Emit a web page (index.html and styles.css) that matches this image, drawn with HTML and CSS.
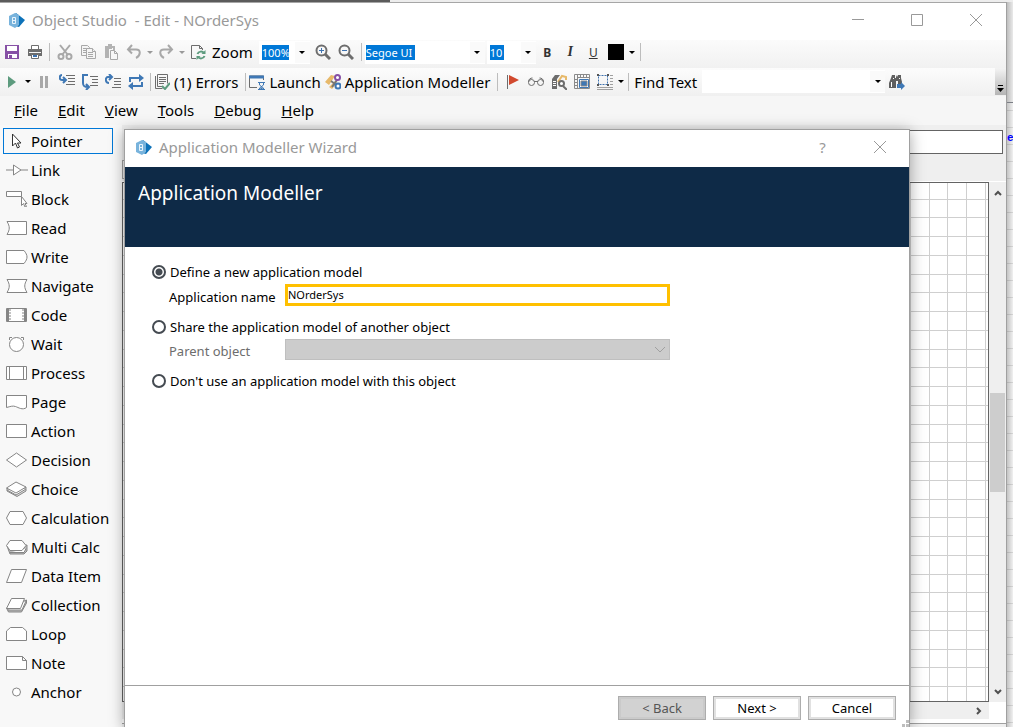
FILE: index.html
```html
<!DOCTYPE html>
<html lang="en">
<head>
    <meta charset="UTF-8">
    <meta name="viewport" content="width=device-width, initial-scale=1.0">
    <title>Object Studio - Edit - NOrderSys</title>
    <link rel="stylesheet" href="styles.css">
</head>
<body>
    <div class="desktop">
        <div class="studio">
            <header class="titlebar">
                <svg class="logo" width="18" height="18" viewBox="0 0 18 18"><path d="M8 2l9 7-6 7-4-1V3z" fill="#0d72b9"/><path d="M1 5l6-3 4 2v10l-4 3-6-3z" fill="#78b3dc"/><path d="M4.500 6.500h3v6h-3zM4.500 9.500h3" fill="none" stroke="#e8f4fc"/></svg>
                <h1>Object Studio &nbsp;- Edit - NOrderSys</h1>
                <div class="window-buttons">
                    <button aria-label="Minimize"><svg width="12" height="12" viewBox="0 0 12 12"><path d="M0 5.5h12"/></svg></button>
                    <button aria-label="Maximize"><svg width="12" height="12" viewBox="0 0 12 12"><path d="M.5.5h11v11H.5z"/></svg></button>
                    <button aria-label="Close"><svg width="12" height="12" viewBox="0 0 12 12"><path d="M0 0l12 12M12 0L0 12"/></svg></button>
                </div>
            </header>

            <div class="toolbar toolbar-edit">
                <button class="tool" aria-label="Save"><svg width="16" height="16" viewBox="0 0 16 16"><path d="M1 1h14v14H1z" fill="#8650a5"/><path d="M3 2h10v5H3zM4 10h9v4H4z" fill="#fff"/><path d="M5 11h3v3H5z" fill="#8650a5"/></svg></button>
                <button class="tool" aria-label="Print"><svg width="16" height="16" viewBox="0 0 16 16"><path d="M4.500 5V1.500h7V5" fill="#fff" stroke="#6d6d6d"/><path d="M1 5h14v7H1z" fill="#6d6d6d"/><path d="M2 8h12v1H2z" fill="#f5f5f5"/><path d="M4.500 10.500h7v4h-7z" fill="#fff" stroke="#6d6d6d"/><path d="M6 12h4" stroke="#3f73b0" stroke-width="2"/></svg></button>
                <span class="sep"></span>
                <button class="tool" aria-label="Cut"><svg width="16" height="16" viewBox="0 0 16 16" fill="none" stroke="#a8a8a8" stroke-width="2"><path d="M3 1l8 10M13 1L5 11"/><circle cx="4" cy="12.500" r="2.500"/><circle cx="12" cy="12.500" r="2.500"/></svg></button>
                <button class="tool" aria-label="Copy"><svg width="16" height="16" viewBox="0 0 16 16" fill="#f5f5f5" stroke="#a8a8a8"><path d="M1.500 1.500h6l2 2v8h-8z"/><path d="M3 4.500h4M3 6.500h4M3 8.500h4"/><path d="M6.500 4.500h6l3 3v7h-9z"/><path d="M12.500 4.500v3h3M8 8.500h5M8 10.500h5M8 12.500h5"/></svg></button>
                <button class="tool" aria-label="Paste"><svg width="16" height="16" viewBox="0 0 16 16"><path d="M2 2h10v4h-2V4H9v1H6v9H2z" fill="#b3b3b3"/><path d="M5 0h4v3H5z" fill="#b3b3b3"/><path d="M7.500 6.500h4l3 3v6h-7z" fill="#f7f7f7" stroke="#a8a8a8"/><path d="M11.500 6.500v3h3" fill="none" stroke="#a8a8a8"/></svg></button>
                <button class="tool" aria-label="Undo"><svg width="16" height="16" viewBox="0 0 16 16" fill="none" stroke="#a8a8a8" stroke-width="2"><path d="M6 1L2 5.500l4 4M2 5.500h8c5 0 5 6 0 8.500"/></svg></button>
                <button class="drop faded" aria-label="Undo list"></button>
                <button class="tool" aria-label="Redo"><svg width="16" height="16" viewBox="0 0 16 16" fill="none" stroke="#a8a8a8" stroke-width="2"><path d="M10 1l4 4.500-4 4M14 5.500H6c-5 0-5 6 0 8.500"/></svg></button>
                <button class="drop faded" aria-label="Redo list"></button>
                <button class="tool" aria-label="Refresh page"><svg width="16" height="16" viewBox="0 0 16 16" fill="none"><path d="M6 14.500H1.500v-13h8l3 3V6M9.500 1.500v3h3" stroke="#6d6d6d"/><path d="M7.500 10c1-3 5-3 6.500-1M14.500 12c-1 3-5 3-6.500 1" stroke="#5d9b7e" stroke-width="2"/><path d="M15.500 6v4h-4zM6.500 16v-4h4z" fill="#5d9b7e"/></svg></button>
                <label class="tool-text" for="zoom">Zoom</label>
                <span class="combo combo-zoom"><input id="zoom" type="text" value="100%"><button class="drop" aria-label="Zoom levels"></button></span>
                <button class="tool" aria-label="Zoom in"><svg width="16" height="16" viewBox="0 0 16 16" fill="none" stroke="#6d6d6d" stroke-width="2"><circle cx="6.500" cy="6.500" r="5"/><path d="M10 10l5 5" stroke-width="3"/><path d="M4 6.500h5M6.500 4v5" stroke="#3f73b0" stroke-width="1"/></svg></button>
                <button class="tool" aria-label="Zoom out"><svg width="16" height="16" viewBox="0 0 16 16" fill="none" stroke="#6d6d6d" stroke-width="2"><circle cx="6.500" cy="6.500" r="5"/><path d="M10 10l5 5" stroke-width="3"/><path d="M4 6.500h5" stroke="#3f73b0" stroke-width="1"/></svg></button>
                <span class="sep"></span>
                <span class="combo combo-font"><input type="text" value="Segoe UI" aria-label="Font"><button class="drop" aria-label="Fonts"></button></span>
                <span class="combo combo-size"><input type="text" value="10" aria-label="Font size"><button class="drop" aria-label="Font sizes"></button></span>
                <button class="tool letter bold">B</button>
                <button class="tool letter italic">I</button>
                <button class="tool letter underline">U</button>
                <button class="tool" aria-label="Font colour"><span class="swatch"></span></button>
                <button class="drop" aria-label="Colours"></button>
                <span class="sep"></span>
            </div>

            <div class="toolbar toolbar-run">
                <button class="tool" aria-label="Go"><svg width="16" height="16" viewBox="0 0 16 16"><path d="M4 2l8 6-8 6z" fill="#5d9b7e"/></svg></button>
                <button class="drop" aria-label="Speed"></button>
                <button class="tool" aria-label="Pause"><svg width="16" height="16" viewBox="0 0 16 16"><path d="M4 2h3v12H4zM9 2h3v12H9z" fill="#a8a8a8"/></svg></button>
                <button class="tool" aria-label="Step in"><svg width="16" height="16" viewBox="0 0 16 16" fill="none"><path d="M3 1c-3 0-3 5 0 5h3M4 3l3 3-3 3" stroke="#3f78b5" stroke-width="2"/><path d="M7 1.500h9M9 4.500h7M9 7.500h7M7 10.500h9" stroke="#6d6d6d"/></svg></button>
                <button class="tool" aria-label="Step over"><svg width="16" height="16" viewBox="0 0 16 16" fill="none"><path d="M6 1H1v8c0 3 1 4 5 4M4 10l3 3-3 3" stroke="#3f78b5" stroke-width="2"/><path d="M8 2.500h8M10 5.500h6M10 8.500h6M8 11.500h8" stroke="#6d6d6d"/></svg></button>
                <button class="tool" aria-label="Step out"><svg width="16" height="16" viewBox="0 0 16 16" fill="none"><path d="M4 9C0 9 0 3 3 3h4M4 0l3 3-3 3" stroke="#3f78b5" stroke-width="2"/><path d="M9 4.500h7M9 7.500h7M9 10.500h7M7 13.500h9" stroke="#6d6d6d"/></svg></button>
                <button class="tool" aria-label="Reset"><svg width="16" height="16" viewBox="0 0 16 16" fill="none" stroke="#3f78b5" stroke-width="2"><path d="M2 8V4h11M2 12h12V8"/><path d="M11 0l5 4-5 4zM5 8l-5 4 5 4z" fill="#3f78b5" stroke="none"/></svg></button>
                <span class="sep"></span>
                <button class="labelled"><svg width="16" height="16" viewBox="0 0 16 16" fill="none" stroke="#6d6d6d"><path d="M3.500.5h10v9M3.500.5v12h5M1.500 2v12.500h7M5 3.500h7M5 5.500h7M5 7.500h7M5 9.500h5"/><path d="M8 12l3 3 5-6" stroke="#5d9b7e" stroke-width="2"/></svg>(1) Errors</button>
                <span class="sep"></span>
                <button class="labelled"><svg width="16" height="16" viewBox="0 0 16 16" fill="none"><path d="M8 13.500H.5V2h14v4" stroke="#6d6d6d"/><path d="M0 3h15" stroke="#3f78b5" stroke-width="3"/><path d="M9 8.500h7M9 15.500h7M10.500 9v2l4 3v1M14.500 9v2l-4 3v1" stroke="#3f78b5"/><path d="M11 15l1.500-2 1.500 2z" fill="#3f78b5"/></svg>Launch</button>
                <button class="labelled"><svg width="16" height="16" viewBox="0 0 16 16" fill="none"><path d="M0 8l6-7 4 1-6 9zM4 13l6-6 2 2-5 6z" fill="#e7b96a"/><path d="M6 7l8 6M7 13l5-7" stroke="#777" stroke-width="2"/><circle cx="12.500" cy="3.500" r="2.500" fill="#fff" stroke="#8650a5" stroke-width="2"/><circle cx="13" cy="12" r="2.500" fill="#fff" stroke="#3f78b5" stroke-width="2"/></svg>Application Modeller</button>
                <span class="sep"></span>
                <button class="tool" aria-label="Breakpoint"><svg width="16" height="16" viewBox="0 0 16 16"><path d="M2.500 1v14" stroke="#6d6d6d"/><path d="M4 1l10 5-10 5z" fill="#d1492e"/></svg></button>
                <button class="tool" aria-label="Watch"><svg width="16" height="16" viewBox="0 0 16 16" fill="none" stroke="#6d6d6d"><circle cx="3.500" cy="8.500" r="3"/><circle cx="12.500" cy="8.500" r="3"/><path d="M6 7.500h4M.500 8c0-3 2-4 4-4M15.500 8c0-3-2-4-4-4"/></svg></button>
                <button class="tool" aria-label="Find references"><svg width="16" height="16" viewBox="0 0 16 16" fill="none"><path d="M1 5l3-4h5L6 5zM1 5h5v10H1z" fill="#6d6d6d"/><path d="M2 7.500h3M2 9.500h3M2 11.500h3" stroke="#fff"/><path d="M7 8l4-6 4 1v3" stroke="#e7b96a" stroke-width="2"/><circle cx="10.500" cy="9.500" r="2.500" fill="#fff" stroke="#6d6d6d" stroke-width="2"/><path d="M12 12l4 4" stroke="#6d6d6d" stroke-width="2"/></svg></button>
                <button class="tool" aria-label="Full screen"><svg width="16" height="16" viewBox="0 0 16 16" fill="none" stroke="#8a8a8a"><path d="M.5.500h15v14H.500zM3.500 1v13M6.500 1v2M9.500 1v2M12.500 1v2M1 5.500h2M1 8.500h2M1 11.500h2M3 3.500h12"/><path d="M5.500 5.500h9v8h-9z" fill="#fff" stroke="#3f78b5"/><path d="M7 7h6v5H7z" fill="#3f78b5"/></svg></button>
                <button class="tool" aria-label="Snap to grid"><svg width="16" height="16" viewBox="0 0 16 16" fill="none" stroke="#a0a0a0"><path d="M1.500 1.500h9v9h-9z" stroke="#3f73b0" stroke-dasharray="2 1"/><path d="M0 0h2v2H0zM10 0h2v2h-2zM0 10h2v2H0zM10 10h2v2h-2z" fill="#555" stroke="none"/><path d="M13 1.500h3M13 4.500h3M13 7.500h3M13 10.500h3M0 13.500h16M0 15.500h16"/></svg></button>
                <button class="drop" aria-label="Grid options"></button>
                <span class="sep"></span>
                <label class="tool-text find-label" for="find">Find Text</label>
                <span class="combo combo-find"><input id="find" type="text"><button class="drop" aria-label="Recent searches"></button></span>
                <button class="tool" aria-label="Find next"><svg width="16" height="16" viewBox="0 0 16 16"><path d="M3 1h3v3h1V1h0l1 2 1-2h3v3l1 4H9v-1H7v7H0V9l2-5zM9 8h4v2H9z" fill="#5f5f5f"/><path d="M2.500 8v5M4 4.500h1M10 4.500h1" stroke="#fff"/><path d="M8 10h4V8l4 4-4 4v-2H8z" fill="#3f78b5"/></svg></button>
                <button class="overflow" aria-label="More buttons"><svg width="7" height="7" viewBox="0 0 7 7"><path d="M1 0h5v1H1zM0 3h7L3.500 7z"/></svg></button>
            </div>

            <nav class="menu">
                <a href="#"><u>F</u>ile</a>
                <a href="#"><u>E</u>dit</a>
                <a href="#"><u>V</u>iew</a>
                <a href="#"><u>T</u>ools</a>
                <a href="#"><u>D</u>ebug</a>
                <a href="#"><u>H</u>elp</a>
            </nav>

            <div class="workspace">
                <aside class="stages">
                    <button class="stage selected"><svg width="22" height="16" viewBox="0 0 22 16"><path d="M6.500 1v12l3-3 2 5 2-1-2-4h3.500z" fill="#fff" stroke="#333"/></svg>Pointer</button>
                    <button class="stage"><svg width="22" height="16" viewBox="0 0 22 16"><path d="M0 8h7.500M15 8h7M7.500 3v10l7.500-5z"/></svg>Link</button>
                    <button class="stage"><svg width="22" height="16" viewBox="0 0 22 16"><path d="M.500.500h15v5h-15z"/><path d="M15.500 5.500v9l2-2 1.500 3.500 1.500-.500-1.500-3h2z" stroke="#555"/></svg>Block</button>
                    <button class="stage"><svg width="22" height="16" viewBox="0 0 22 16"><path d="M1 1.500h19.500v13H1c3-5 3-8 0-13z"/></svg>Read</button>
                    <button class="stage"><svg width="22" height="16" viewBox="0 0 22 16"><path d="M.500 1.500H18c4 5 4 8 0 13H.500z"/></svg>Write</button>
                    <button class="stage"><svg width="22" height="16" viewBox="0 0 22 16"><path d="M1 1.500h20c-3 5-3 8 0 13H1c3-5 3-8 0-13z"/></svg>Navigate</button>
                    <button class="stage"><svg width="22" height="16" viewBox="0 0 22 16"><path d="M.500 1.500h20v13H.500z"/><path d="M2 2v12M19 2v12" stroke="#aaa" stroke-width="2"/><path d="M4 2v12M17 2v12" stroke-dasharray="2 1"/></svg>Code</button>
                    <button class="stage"><svg width="22" height="16" viewBox="0 0 22 16"><circle cx="10.500" cy="8.500" r="7"/><path d="M3.500 4V1.500H6M15 1.500h2.500V4"/></svg>Wait</button>
                    <button class="stage"><svg width="22" height="16" viewBox="0 0 22 16"><path d="M.500 1.500h20v13H.500zM3.500 2v12M17.500 2v12"/></svg>Process</button>
                    <button class="stage"><svg width="22" height="16" viewBox="0 0 22 16"><path d="M.500 1.500h20v12c-4 3-8 0-11-1s-5 0-9 1z"/></svg>Page</button>
                    <button class="stage"><svg width="22" height="16" viewBox="0 0 22 16"><path d="M.500 1.500h20v13H.500z"/></svg>Action</button>
                    <button class="stage"><svg width="22" height="16" viewBox="0 0 22 16"><path d="M.500 8l10-7 10 7-10 7z"/></svg>Decision</button>
                    <button class="stage"><svg width="22" height="16" viewBox="0 0 22 16"><path d="M1 10v-3l9 5 10-6v4l-9 5.500z" fill="#ddd"/><path d="M1 9l9 5 10-6"/><path d="M.500 7L10 1l10 5-10 6z"/></svg>Choice</button>
                    <button class="stage"><svg width="22" height="16" viewBox="0 0 22 16"><path d="M4 1.500h13l3.500 6.500-3.500 6.500H4L.500 8z"/></svg>Calculation</button>
                    <button class="stage"><svg width="22" height="16" viewBox="0 0 22 16"><path d="M1 7l3 8h14l3-3V6z" fill="#bbb"/><path d="M4 13.500h14l2-4"/><path d="M4 1.500h12l4 5-4 5H4l-3.500-5z"/></svg>Multi Calc</button>
                    <button class="stage"><svg width="22" height="16" viewBox="0 0 22 16"><path d="M5.500 1.500h15l-5 13H.500z"/></svg>Data Item</button>
                    <button class="stage"><svg width="22" height="16" viewBox="0 0 22 16"><path d="M.500 11l2 4h13l5-9V3z" fill="#bbb"/><path d="M2 13h14l4-9"/><path d="M5.500 1.500h13l-4 10H.500z"/></svg>Collection</button>
                    <button class="stage"><svg width="22" height="16" viewBox="0 0 22 16"><path d="M.500 14.500V5l4-3.500h12l4 3.500v9.500z"/></svg>Loop</button>
                    <button class="stage"><svg width="22" height="16" viewBox="0 0 22 16"><path d="M.500 1.500h16l4 4v9H.500zM16.500 1.500v4h4"/></svg>Note</button>
                    <button class="stage"><svg width="22" height="16" viewBox="0 0 22 16"><circle cx="10.500" cy="8" r="4"/></svg>Anchor</button>
                </aside>

                <main class="editor">
                    <input class="expression" type="text" aria-label="Expression">
                    <div class="tabs"><div class="tab"></div></div>
                    <div class="canvas-row">
                        <svg class="canvas">
                            <defs>
                                <pattern id="grid" x="37" y="16" width="75" height="75" patternUnits="userSpaceOnUse">
                                    <path d="M.5 0v75M19.5 0v75M37.5 0v75M56.500 0v75M0 .5h75M0 18.500h75M0 37.500h75M0 56.500h75" stroke="#cfcfcf"/>
                                </pattern>
                            </defs>
                            <rect width="100%" height="100%" fill="url(#grid)"/>
                        </svg>
                        <div class="scroll-y">
                            <svg class="arrow" width="8" height="6" viewBox="0 0 8 6"><path d="M1 5l3-3 3 3"/></svg>
                            <div class="thumb"></div>
                            <svg class="arrow" width="8" height="6" viewBox="0 0 8 6"><path d="M1 1l3 3 3-3"/></svg>
                        </div>
                    </div>
                    <div class="scroll-x"><svg class="arrow" width="6" height="8" viewBox="0 0 6 8"><path d="M1 1l3 3-3 3"/></svg></div>
                    <div class="status"></div>
                </main>
            </div>
        </div>

        <div class="behind"><span>e</span></div>

        <div class="dialog" role="dialog" aria-labelledby="wizardTitle">
            <header class="titlebar">
                <svg class="logo" width="18" height="18" viewBox="0 0 18 18"><path d="M8 2l9 7-6 7-4-1V3z" fill="#0d72b9"/><path d="M1 5l6-3 4 2v10l-4 3-6-3z" fill="#78b3dc"/><path d="M4.500 6.500h3v6h-3zM4.500 9.500h3" fill="none" stroke="#e8f4fc"/></svg>
                <h2 id="wizardTitle">Application Modeller Wizard</h2>
                <div class="window-buttons">
                    <button aria-label="Help">?</button>
                    <button aria-label="Close"><svg width="12" height="12" viewBox="0 0 12 12"><path d="M0 0l12 12M12 0L0 12"/></svg></button>
                </div>
            </header>
            <div class="banner">Application Modeller</div>
            <form class="options">
                <div class="option">
                    <label class="choice"><input type="radio" name="model" checked>Define a new application model</label>
                    <div class="field">
                        <label for="appName">Application name</label>
                        <input id="appName" type="text" value="NOrderSys">
                    </div>
                </div>
                <div class="option">
                    <label class="choice"><input type="radio" name="model">Share the application model of another object</label>
                    <div class="field disabled">
                        <label for="parent">Parent object</label>
                        <div class="select-box">
                            <select id="parent" disabled></select>
                            <svg width="10" height="6" viewBox="0 0 10 6"><path d="M0 0l5 5 5-5" fill="none" stroke="#a0a0a0"/></svg>
                        </div>
                    </div>
                </div>
                <div class="option">
                    <label class="choice"><input type="radio" name="model">Don't use an application model with this object</label>
                </div>
            </form>
            <footer class="actions">
                <button disabled>&lt; Back</button>
                <button>Next &gt;</button>
                <button>Cancel</button>
                <svg class="grip" width="7" height="7" viewBox="0 0 7 7"><path d="M4 0h3v3H4zM0 4h3v3H0zM4 4h3v3H4z" fill="#bdbdbd"/></svg>
            </footer>
        </div>
    </div>
</body>
</html>
```
FILE: styles.css
```css
* {
    box-sizing: border-box;
}
body {
    margin: 0;
    font-family: "Noto Sans", "Open Sans", sans-serif;
    font-size: 15px;
    color: #000;
}
button, input, select {
    font: inherit;
    color: inherit;
    margin: 0;
    padding: 0;
    border: none;
    border-radius: 0;
    background: none;
}
svg {
    display: block;
    flex: none;
}
.desktop {
    position: relative;
    display: flex;
    height: 100vh;
    overflow: hidden;
    padding-top: 2px;
    background: linear-gradient(90deg, #5b5b5b 390px, #ededed 390px);
}
.studio {
    flex: 1;
    min-width: 0;
    display: flex;
    flex-direction: column;
    background: #f6f6f6;
    border-top: 1px solid #a6a6a6;
    border-right: 1px solid #a0a0a0;
}
.behind {
    width: 6px;
    padding-top: 128px;
    font: bold 11px/17px "Liberation Mono", monospace;
    color: #00f;
    background:
        linear-gradient(#7c7f86, #7c7f86) 0 100px / 100% 1px no-repeat,
        linear-gradient(90deg, rgba(0, 0, 0, .2), rgba(0, 0, 0, .02)),
        linear-gradient(#eee, #eee) 0 0 / 100% 100px no-repeat,
        repeating-linear-gradient(#f5f5f5 0 6px, #dadada 6px 7px, #f5f5f5 7px 17px);
}

/* title bars */
.titlebar {
    display: flex;
    align-items: center;
    height: 37px;
    flex: none;
    padding: 0 1px 3px 8px;
    background: #fff;
    color: #999;
}
.titlebar h1, .titlebar h2 {
    flex: 1;
    margin: 0 0 0 6px;
    font-size: 15px;
    font-weight: normal;
    white-space: nowrap;
}
.window-buttons {
    display: flex;
}
.window-buttons button {
    display: flex;
    align-items: center;
    justify-content: center;
    width: 59px;
    height: 34px;
}
.window-buttons path {
    fill: none;
    stroke: #999;
}

/* toolbars */
.toolbar {
    display: flex;
    align-items: center;
    flex: none;
    height: 28px;
}
.toolbar-edit {
    padding-bottom: 4px;
    background: linear-gradient(#fbfbfb, #f1f1f1);
}
.toolbar-run {
    padding-bottom: 1px;
    background: linear-gradient(#fcfcfc, #f0f0f0);
}
.toolbar button {
    height: 24px;
    flex: none;
}
.tool {
    display: flex;
    align-items: center;
    justify-content: center;
    width: 23px;
}
.sep {
    flex: none;
    width: 1px;
    height: 18px;
    margin: 0 3px;
    background: #bdbdbd;
}
.drop {
    width: 9px;
    display: flex;
    align-items: center;
    justify-content: center;
}
.drop::before {
    content: "";
    border: 3px solid transparent;
    border-top-color: #000;
    border-bottom: none;
}
.drop.faded::before {
    border-top-color: #999;
}
.tool-text {
    padding: 0 6px 0 3px;
    white-space: nowrap;
}
.find-label {
    padding: 0 5px 0 2px;
}
.combo {
    display: flex;
    align-items: center;
    justify-content: space-between;
    flex: none;
    height: 23px;
    padding-left: 3px;
    background: #fff;
}
.combo input {
    height: 15px;
    font-size: 11px;
    line-height: 15px;
    color: #fff;
    background: #0078d7;
}
.combo .drop {
    width: 15px;
    height: 21px;
    background: #fafafa;
}
.combo-zoom {
    width: 51px;
    margin-right: 2px;
}
.combo-zoom input {
    width: 27px;
}
.combo-font {
    width: 120px;
    margin-right: 2px;
    padding-left: 1px;
}
.combo-font input {
    width: 49px;
}
.combo-size {
    width: 49px;
}
.combo-size input {
    width: 14px;
}
.combo-find {
    width: 183px;
}
.combo-find input {
    flex: 1;
    min-width: 0;
    color: #000;
    background: #fff;
}
.letter {
    font: 14px "Liberation Serif", serif;
    color: #333;
}
.bold {
    font: bold 12px "Noto Sans", sans-serif;
}
.italic {
    font-style: italic;
    font-weight: bold;
}
.underline {
    font: 12px "Noto Sans", sans-serif;
    text-decoration: underline;
}
.swatch {
    width: 16px;
    height: 16px;
    background: #000;
}
.labelled {
    display: flex;
    align-items: center;
    gap: 4px;
    padding-right: 4px;
    white-space: nowrap;
}
.toolbar .overflow {
    display: flex;
    align-items: flex-end;
    justify-content: center;
    align-self: stretch;
    width: 11px;
    height: auto;
    margin-left: auto;
    padding-bottom: 3px;
    background: linear-gradient(#f3f3f3, #b5b5b5);
}

.menu {
    display: flex;
    gap: 20px;
    flex: none;
    height: 29px;
    padding-left: 14px;
    line-height: 29px;
}
.menu a {
    color: #000;
    text-decoration: none;
}

/* stage list */
.workspace {
    display: flex;
    flex: 1;
    min-height: 0;
}
.stages {
    display: flex;
    flex-direction: column;
    width: 122px;
    padding: 3px 9px 0 3px;
    gap: 3px;
    background: #f8f8f8;
}
.stage {
    display: flex;
    align-items: center;
    gap: 3px;
    flex: none;
    height: 26px;
    padding-left: 2px;
    border: 1px solid transparent;
    white-space: nowrap;
}
.stage.selected {
    border-color: #0078d7;
}
.stage path, .stage circle {
    stroke: #858585;
}
.stage path:not([fill]), .stage circle {
    fill: #fff;
}
.stage.selected path {
    stroke: #333;
}

/* editor */
.editor {
    display: flex;
    flex-direction: column;
    flex: 1;
    min-width: 0;
    background: #efefef;
}
.expression {
    flex: none;
    height: 24px;
    margin: 5px 3px 0 60px;
    border: 1px solid #646464;
    background: #fff;
}
.tabs {
    flex: none;
    height: 28px;
    padding-top: 6px;
    border-bottom: 1px solid #fff;
}
.tab {
    width: 60px;
    height: 19px;
    border: 1px solid #a0a0a0;
}
.canvas-row {
    display: flex;
    flex: 1;
    min-height: 0;
}
.canvas {
    flex: 1;
    min-width: 0;
    height: 100%;
    background: #fff;
    border: 1px solid #646464;
}
.scroll-y {
    display: flex;
    flex-direction: column;
    align-items: center;
    width: 17px;
    padding: 8px 0 7px;
}
.thumb {
    width: 15px;
    height: 99px;
    margin: auto 0;
    background: #cdcdcd;
}
.arrow path {
    fill: none;
    stroke: #505050;
    stroke-width: 2;
}
.scroll-x {
    display: flex;
    align-items: center;
    justify-content: flex-end;
    flex: none;
    height: 17px;
    padding-right: 7px;
    border-right: 17px solid #fff;
}
.status {
    flex: none;
    height: 8px;
    border-top: 4px solid #fff;
    box-shadow: inset 0 1px #a0a0a0;
}

/* wizard */
.dialog {
    position: absolute;
    top: 129px;
    right: 103px;
    bottom: 0;
    left: 124px;
    display: flex;
    flex-direction: column;
    background: #fff;
    border: 1px solid #a0a0a0;
    border-bottom: none;
    box-shadow: 0 2px 14px rgba(0, 0, 0, .35);
}
.dialog .window-buttons button {
    width: 57px;
}
.dialog .titlebar {
    padding-left: 10px;
}
.banner {
    flex: none;
    height: 80px;
    padding: 12px 13px;
    font-size: 19px;
    line-height: 28px;
    color: #fff;
    background: #0e2a47;
}
.options {
    display: flex;
    flex-direction: column;
    flex: 1;
    gap: 10px;
    padding: 14px 27px;
    font-size: 13px;
}
.option {
    display: flex;
    flex-direction: column;
    gap: 1px;
}
.choice {
    display: flex;
    align-items: center;
    gap: 4px;
    height: 22px;
}
.choice input {
    appearance: none;
    width: 14px;
    height: 14px;
    border: 2px solid #454b52;
    border-radius: 50%;
}
.choice input:checked {
    background: radial-gradient(#454b52 3px, #fff 4px);
}
.field {
    display: flex;
    align-items: flex-end;
    padding-left: 17px;
}
.field label {
    width: 116px;
    line-height: 18px;
}
.disabled label {
    color: #6d6d6d;
}
.field > input {
    flex: 0 1 385px;
    height: 22px;
    padding-bottom: 2px;
    border: 3px solid #ffc000;
    font-size: 11px;
    line-height: 14px;
}
.select-box {
    display: grid;
    align-items: center;
    flex: 0 1 385px;
}
.select-box select, .select-box svg {
    grid-area: 1 / 1;
}
.select-box select {
    appearance: none;
    width: 100%;
    height: 21px;
    border: 1px solid #bfbfbf;
    background: #ccc;
    opacity: 1;
}
.select-box svg {
    justify-self: end;
    margin-right: 5px;
}
.actions {
    position: relative;
    display: flex;
    justify-content: flex-end;
    gap: 7px;
    flex: none;
    height: 42px;
    padding: 10px 13px 0 0;
    border-top: 1px solid #a0a0a0;
    font-size: 13px;
}
.actions button {
    width: 88px;
    height: 24px;
    border: 1px solid #adadad;
    box-shadow: inset 0 0 0 2px #e1e1e1;
}
.actions button:disabled {
    color: #555;
    background: #d2d2d2;
    box-shadow: inset 0 0 0 2px #cacaca;
}
.grip {
    position: absolute;
    right: 0;
    bottom: 0;
}
```
